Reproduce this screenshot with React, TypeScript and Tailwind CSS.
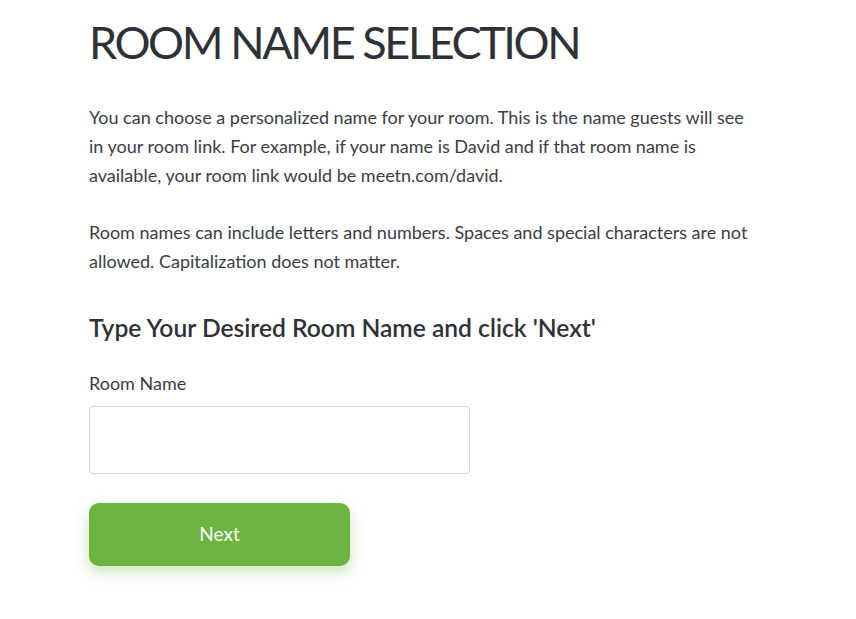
import { useState } from 'react';

export default function App() {
  const [roomName, setRoomName] = useState('');

  return (
    <div className="min-h-screen bg-white font-['Lato','Noto_Sans',sans-serif] text-[#3a3d45]">
      <div className="pl-[89px] pt-[14px]">
        <h1 className="text-[45px] leading-[56px] font-normal text-[#2e3136] tracking-[-2.4px]">
          ROOM NAME SELECTION
        </h1>

        <p className="mt-[33px] w-[666px] text-[18px] leading-[29px]">
          You can choose a personalized name for your room. This is the name guests will see in your room link. For
          example, if your name is David and if that room name is available, your room link would be meetn.com/david.
        </p>

        <p className="mt-[28px] w-[666px] text-[18px] leading-[29px]">
          Room names can include letters and numbers. Spaces and special characters are not allowed. Capitalization
          does not matter.
        </p>

        <h2 className="mt-[37px] text-[24.6px] leading-[30px] font-semibold text-[#2e3136]">
          Type Your Desired Room Name and click 'Next'
        </h2>

        <label htmlFor="room-name" className="block mt-[28px] text-[18px] leading-[24px]">
          Room Name
        </label>
        <input
          id="room-name"
          type="text"
          value={roomName}
          onChange={(e) => setRoomName(e.target.value)}
          className="block mt-[11px] w-[381px] h-[68px] rounded-[4px] border border-[#d3d6dc] px-3 text-[18px] outline-none"
        />

        <button
          type="button"
          className="mt-[29px] w-[261px] h-[63px] rounded-[10px] bg-[#6db33f] text-white text-[19px] shadow-[0_6px_14px_rgba(109,179,63,0.35)]"
        >
          Next
        </button>
      </div>
    </div>
  );
}
